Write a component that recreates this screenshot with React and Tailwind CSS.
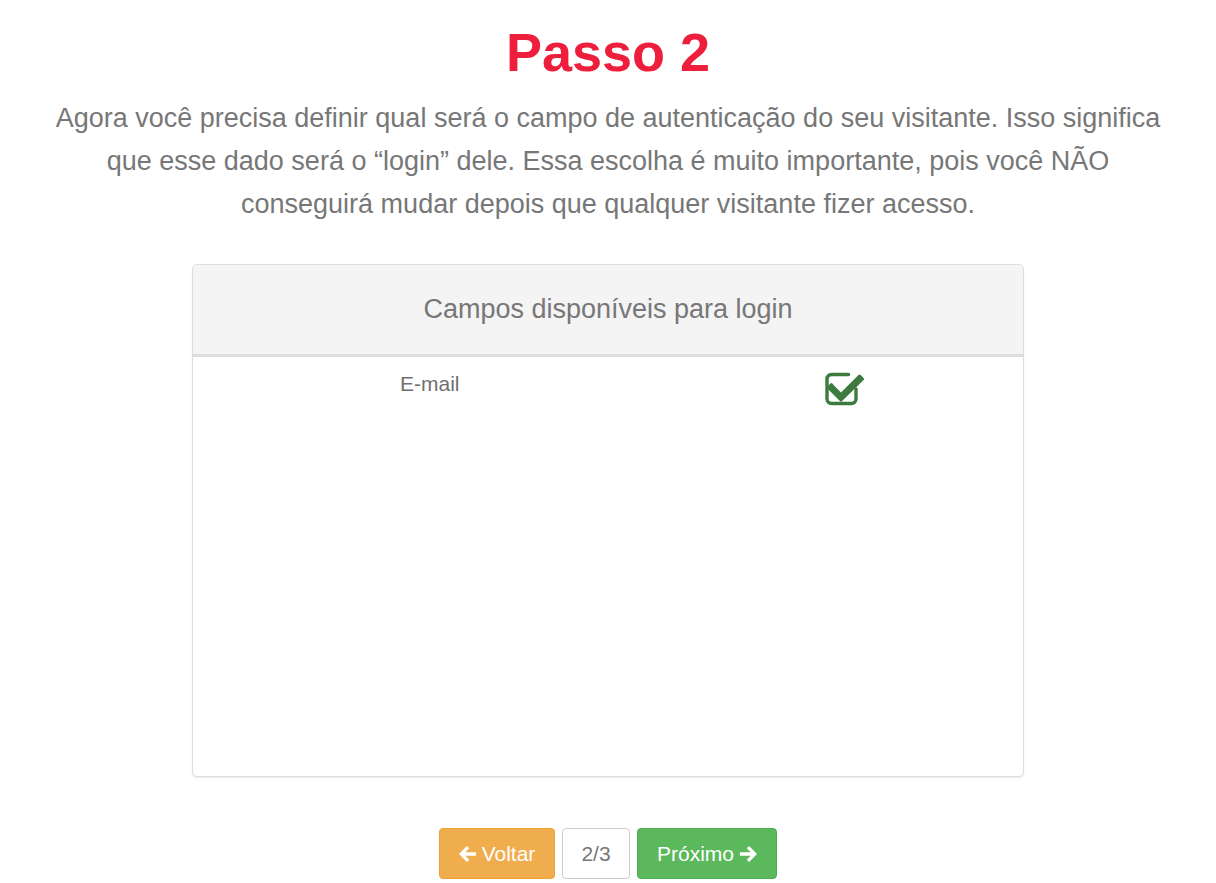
import React from 'react';

function CheckSquare() {
  return (
    <svg width="40" height="36" viewBox="0 0 40 36" className="text-[#3d7a3d]">
      <path
        d="M31 19v10a4.5 4.5 0 0 1-4.5 4.5h-20A4.5 4.5 0 0 1 2 29V9a4.5 4.5 0 0 1 4.5-4.5h17"
        fill="none"
        stroke="currentColor"
        strokeWidth="3.4"
        strokeLinecap="round"
      />
      <path d="M8 14.5l8 8L33.5 5a1.5 1.5 0 0 1 2.1 0l3 3a1.5 1.5 0 0 1 0 2.1L17.1 31.1a1.5 1.5 0 0 1-2.2 0L2.4 18.6a1.5 1.5 0 0 1 0-2.1l3-3a1.5 1.5 0 0 1 2.1 0z" fill="currentColor" />
    </svg>
  );
}

function ArrowLeft() {
  return (
    <svg width="18" height="18" viewBox="0 0 16 16" fill="currentColor">
      <path d="M7 0.8l2.1 2.1L5.6 6.4H15.2v3.2H5.6l3.5 3.5L7 15.2 0 8z" />
    </svg>
  );
}

function ArrowRight() {
  return (
    <svg width="18" height="18" viewBox="0 0 16 16" fill="currentColor">
      <path d="M9 0.8L6.9 2.9l3.5 3.5H0.8v3.2h9.6l-3.5 3.5L9 15.2 16 8z" />
    </svg>
  );
}

export default function App() {
  return (
    <div className="min-h-screen bg-white font-['Liberation_Sans',Arial,sans-serif]">
      <div className="px-[40px] pt-[18px] text-center">
        <h1 className="text-[54px] leading-[68px] font-bold text-[#ed1f3c]">Passo 2</h1>
        <p className="mt-[11px] text-[27px] leading-[43px] text-[#777]">
          Agora você precisa definir qual será o campo de autenticação do seu visitante. Isso significa que esse dado será o “login” dele. Essa escolha é muito importante, pois você NÃO conseguirá mudar depois que qualquer visitante fizer acesso.
        </p>
      </div>

      <section className="mx-auto mt-[38px] w-[832px] h-[513px] rounded-[5px] border border-[#ddd] shadow-[0_1px_2px_rgba(0,0,0,0.08)] bg-white overflow-hidden">
        <div className="h-[92px] bg-[#f4f4f4] border-b-[3px] border-[#ddd] flex items-center justify-center">
          <span className="text-[27px] text-[#777]">Campos disponíveis para login</span>
        </div>
        <div className="flex items-start pt-[14px]">
          <div className="pl-[207px] w-[632px] text-[21px] leading-[26px] text-[#6f6f6f]">E-mail</div>
          <div className="-mt-[1px]">
            <CheckSquare />
          </div>
        </div>
      </section>

      <div className="mt-[51px] flex justify-center gap-[7px]">
        <button className="h-[51px] w-[116px] rounded-[4px] bg-[#f0ad4e] border border-[#eea236] text-white text-[21px] flex items-center justify-center gap-[5px]">
          <ArrowLeft /> Voltar
        </button>
        <div className="h-[51px] w-[68px] rounded-[4px] bg-white border border-[#ccc] text-[#777] text-[21px] flex items-center justify-center">
          2/3
        </div>
        <button className="h-[51px] w-[140px] rounded-[4px] bg-[#5cb85c] border border-[#4cae4c] text-white text-[21px] flex items-center justify-center gap-[5px]">
          Próximo <ArrowRight />
        </button>
      </div>
    </div>
  );
}
